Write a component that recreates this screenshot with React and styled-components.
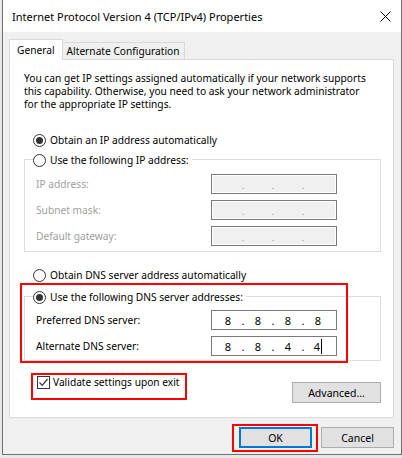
import React from 'react';
import styled, { createGlobalStyle } from 'styled-components';

const GlobalStyle = createGlobalStyle`
  html, body {
    margin: 0;
    padding: 0;
    background: #e9e9e9;
  }
  body {
    font-family: "Noto Sans", "Open Sans", sans-serif;
    font-size: 10.2px;
    color: #000;
  }
`;

const Window = styled.div`
  box-sizing: border-box;
  margin-left: 2px;
  width: 400px;
  height: 455px;
  background: #f0f0f0;
  border: 1px solid #707070;
  border-top: none;
  display: flex;
  flex-direction: column;
`;

const TitleBar = styled.div`
  height: 32px;
  background: #fff;
  display: flex;
  align-items: center;
  justify-content: space-between;
  padding: 0 10px 0 9px;
  font-size: 11px;
`;

const Body = styled.div`
  flex: 1;
  display: flex;
  flex-direction: column;
  padding: 7px 7px 0 6px;
`;

const TabRow = styled.div`
  display: flex;
  align-items: flex-end;
  position: relative;
  z-index: 1;
  margin-bottom: -1px;
`;

const Tab = styled.div`
  box-sizing: border-box;
  height: ${p => (p.active ? '21px' : '18px')};
  padding: 0 ${p => (p.active ? '7px' : '4px')};
  display: flex;
  align-items: center;
  background: ${p => (p.active ? '#fff' : '#f0f0f0')};
  border: 1px solid #d9d9d9;
  border-bottom: ${p => (p.active ? 'none' : '1px solid #d9d9d9')};
  border-left: ${p => (p.active ? '1px solid #d9d9d9' : 'none')};
`;

const Panel = styled.div`
  box-sizing: border-box;
  height: 359px;
  background: #fff;
  border: 1px solid #d9d9d9;
  padding: 12px 12px 0 14px;
  display: flex;
  flex-direction: column;
`;

const Intro = styled.p`
  margin: 0;
  line-height: 13px;
  white-space: nowrap;
`;

const RadioRow = styled.label`
  display: flex;
  align-items: center;
  gap: 4px;
  height: 14px;
  padding-left: ${p => p.indent || 0}px;
  margin-top: ${p => p.top || 0}px;
  color: #000;
`;

const RadioDot = styled.span`
  box-sizing: border-box;
  width: 13px;
  height: 13px;
  border: 1px solid #333;
  border-radius: 50%;
  background: #fff;
  display: flex;
  align-items: center;
  justify-content: center;
  flex: none;
  &::after {
    content: '';
    width: 7px;
    height: 7px;
    border-radius: 50%;
    background: ${p => (p.checked ? '#333' : 'transparent')};
  }
`;

const GroupBox = styled.div`
  position: relative;
  border: 1px solid #dcdcdc;
  margin-top: ${p => p.top}px;
  padding: 0 0 ${p => p.bottom}px 11px;
  display: flex;
  flex-direction: column;
  gap: 6px;
`;

const Legend = styled.div`
  align-self: flex-start;
  margin: -7px 0 ${p => p.gap - 6}px -3px;
  padding-right: 3px;
  background: #fff;
`;

const FieldRow = styled.div`
  display: flex;
  align-items: center;
  height: 20px;
`;

const FieldLabel = styled.span`
  width: 175px;
  color: ${p => (p.disabled ? '#a0a0a0' : '#000')};
`;

const IpBox = styled.div`
  box-sizing: border-box;
  width: 126px;
  height: 20px;
  border: 1px solid #7a7a7a;
  background: ${p => (p.disabled ? '#f0f0f0' : '#fff')};
  box-shadow: ${p => (p.disabled ? 'inset 0 0 0 1px #fff' : 'none')};
  display: flex;
  align-items: center;
  padding-left: 4px;
  font-size: 11px;
`;

const Octet = styled.span`
  width: 24px;
  display: flex;
  justify-content: center;
  align-items: center;
`;

const Dot = styled.span`
  width: 6px;
  text-align: center;
  color: ${p => (p.disabled ? '#8a8aa8' : '#000')};
  font-size: ${p => (p.disabled ? '9px' : '11px')};
  margin-top: ${p => (p.disabled ? '3px' : '0')};
`;

const Caret = styled.span`
  width: 1px;
  height: 15px;
  background: #000;
  margin-left: 1px;
`;

const Highlight = styled.div`
  position: absolute;
  left: ${p => p.x}px;
  top: ${p => p.y}px;
  width: ${p => p.w}px;
  height: ${p => p.h}px;
  box-sizing: border-box;
  border: 2px solid #ff0000;
  pointer-events: none;
`;

const BottomRow = styled.div`
  display: flex;
  justify-content: space-between;
  align-items: flex-start;
  margin-top: 14px;
`;

const CheckLabel = styled.label`
  position: relative;
  display: flex;
  align-items: center;
  gap: 3px;
  height: 14px;
  margin-left: 13px;
`;

const CheckBox = styled.span`
  box-sizing: border-box;
  width: 13px;
  height: 13px;
  border: 1px solid #333;
  background: #fff;
  display: flex;
  align-items: center;
  justify-content: center;
`;

const Button = styled.div`
  box-sizing: border-box;
  position: relative;
  width: ${p => p.w}px;
  height: 21px;
  margin-top: ${p => p.top || 0}px;
  background: #e1e1e1;
  border: ${p => (p.primary ? '2px solid #0078d7' : '1px solid #adadad')};
  display: flex;
  align-items: center;
  justify-content: center;
  font-size: 10.5px;
`;

const Footer = styled.div`
  display: flex;
  justify-content: flex-end;
  gap: 9px;
  padding-top: 9px;
`;

const IpField = ({ value, disabled, caret }) => {
  const parts = value || ['', '', '', ''];
  return (
    <IpBox disabled={disabled}>
      {parts.map((part, i) => (
        <React.Fragment key={i}>
          {i > 0 && <Dot disabled={disabled}>.</Dot>}
          <Octet>
            {part}
            {caret && i === 3 && <Caret />}
          </Octet>
        </React.Fragment>
      ))}
    </IpBox>
  );
};

const App = () => {
  return (
    <>
      <GlobalStyle />
      <Window>
        <TitleBar>
          <span>Internet Protocol Version 4 (TCP/IPv4) Properties</span>
          <svg width="11" height="11" viewBox="0 0 11 11">
            <path d="M0.5 0.5 L10.5 10.5 M10.5 0.5 L0.5 10.5" stroke="#000" strokeWidth="1" />
          </svg>
        </TitleBar>
        <Body>
          <TabRow>
            <Tab active>General</Tab>
            <Tab>Alternate Configuration</Tab>
          </TabRow>
          <Panel>
            <Intro>
              You can get IP settings assigned automatically if your network supports
              <br />
              this capability. Otherwise, you need to ask your network administrator
              <br />
              for the appropriate IP settings.
            </Intro>

            <RadioRow indent={9} top={22}>
              <RadioDot checked />
              Obtain an IP address automatically
            </RadioRow>

            <GroupBox top={12} bottom={5}>
              <Legend gap={7}>
                <RadioRow>
                  <RadioDot />
                  Use the following IP address:
                </RadioRow>
              </Legend>
              <FieldRow>
                <FieldLabel disabled>IP address:</FieldLabel>
                <IpField disabled />
              </FieldRow>
              <FieldRow>
                <FieldLabel disabled>Subnet mask:</FieldLabel>
                <IpField disabled />
              </FieldRow>
              <FieldRow>
                <FieldLabel disabled>Default gateway:</FieldLabel>
                <IpField disabled />
              </FieldRow>
            </GroupBox>

            <RadioRow indent={9} top={16}>
              <RadioDot />
              Obtain DNS server address automatically
            </RadioRow>

            <GroupBox top={14} bottom={4}>
              <Legend gap={6}>
                <RadioRow>
                  <RadioDot checked />
                  Use the following DNS server addresses:
                </RadioRow>
              </Legend>
              <FieldRow>
                <FieldLabel>Preferred DNS server:</FieldLabel>
                <IpField value={['8', '8', '8', '8']} />
              </FieldRow>
              <FieldRow>
                <FieldLabel>Alternate DNS server:</FieldLabel>
                <IpField value={['8', '8', '4', '4']} caret />
              </FieldRow>
              <Highlight x={-5} y={-14} w={328} h={80} />
            </GroupBox>

            <BottomRow>
              <CheckLabel>
                <CheckBox>
                  <svg width="11" height="11" viewBox="0 0 11 11">
                    <path d="M1.5 5.5 L4.2 8.3 L9.5 2" stroke="#333" strokeWidth="1.2" fill="none" />
                  </svg>
                </CheckBox>
                Validate settings upon exit
                <Highlight x={-6} y={-2} w={156} h={27} />
              </CheckLabel>
              <Button w={89} top={7}>Advanced...</Button>
            </BottomRow>
          </Panel>
          <Footer>
            <Button w={73} primary>
              OK
              <Highlight x={-9} y={-5} w={86} h={28} />
            </Button>
            <Button w={73}>Cancel</Button>
          </Footer>
        </Body>
      </Window>
    </>
  );
};

export default App;
